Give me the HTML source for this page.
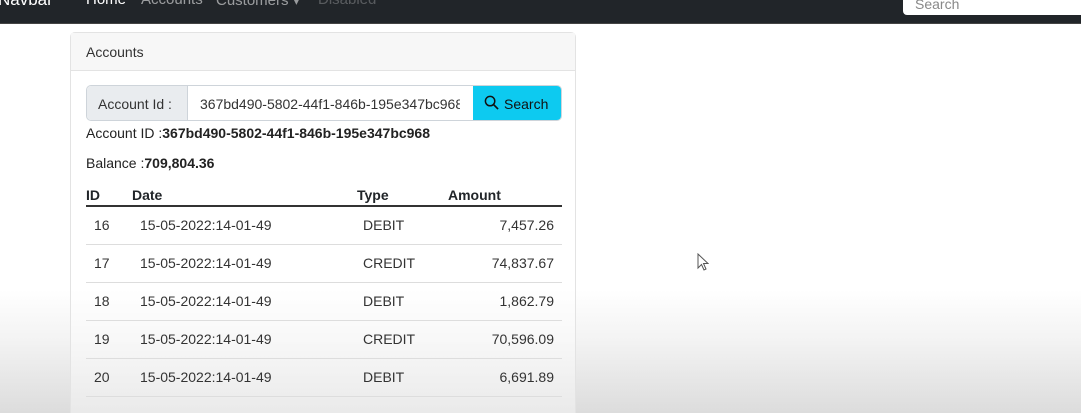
<!DOCTYPE html>
<html style="width:1081px;height:413px;overflow:hidden;background:linear-gradient(180deg,#fff 0,#fff 290px,#f3f3f3 340px,#dcdcdc 413px)"><head><meta charset="utf-8"><style>
*{box-sizing:border-box;margin:0;padding:0}
body{width:1081px;height:413px;overflow:hidden;font-family:"Liberation Sans",sans-serif;color:#212529;font-size:14px;
background:linear-gradient(180deg,#fff 0,#fff 290px,#f3f3f3 340px,#dcdcdc 413px);position:relative}
.nav{position:absolute;left:0;top:0;width:1081px;height:24px;background:#212529;border-bottom:1px solid #444}
.nav span{position:absolute;top:-9px;font-size:15px;color:rgba(255,255,255,.55)}
.srch{position:absolute;left:903px;top:-10px;width:190px;height:25px;background:#fff;border-radius:4px;color:#888;font-size:14px;padding:6px 12px}
.card{position:absolute;left:70px;top:32px;width:506px;height:400px;border:1px solid #e3e3e3;border-radius:5px;background:rgba(255,255,255,.4)}
.ch{height:38px;background:#f7f7f7;border-bottom:1px solid #e3e3e3;padding:11px 15px;font-size:14px;color:#333}
.ig{position:absolute;left:15px;top:52px;width:476px;height:36px;border:1px solid #ced4da;border-radius:5px;overflow:hidden;background:#fff}
.lab{position:absolute;left:0;top:0;width:101px;height:34px;background:#e9ecef;border-right:1px solid #ced4da;padding:10px 11px;color:#333}
.inp{position:absolute;left:113px;top:10px;width:260px;white-space:nowrap;overflow:hidden;color:#333}
.btn{position:absolute;right:0;top:0;width:88px;height:34px;background:#0dcaf0;padding:10px 0 0 31px;color:#111}
.t{position:absolute;left:15px;font-size:14px;color:#222}
table{position:absolute;left:15px;top:152px;width:476px;border-collapse:collapse}
th{text-align:left;font-weight:bold;height:21px;border-bottom:2px solid #333;font-size:14px;padding:0}
td{height:38px;border-bottom:1px solid #ddd;padding:0;font-size:14px;color:#333}
</style></head><body>
<div class="nav"><span style="left:-2px;color:#fff;font-size:17px;top:-10px">Navbar</span><span style="left:86px;color:#fff">Home</span><span style="left:141px">Accounts</span><span style="left:216px">Customers ▾</span><span style="left:318px;color:rgba(255,255,255,.25)">Disabled</span>
<div class="srch">Search</div></div>
<div class="card"><div class="ch">Accounts</div>
<div class="ig"><div class="lab">Account Id :</div><div class="inp">367bd490-5802-44f1-846b-195e347bc968</div>
<div class="btn"><svg style="position:absolute;left:11px;top:9px" width="15" height="15" viewBox="0 0 16 16"><circle cx="6.5" cy="6.5" r="5" fill="none" stroke="#111" stroke-width="1.6"/><path d="M10.2 10.2L15 15" stroke="#111" stroke-width="1.8"/></svg>Search</div></div>
<div class="t" style="top:92px">Account ID :<b>367bd490-5802-44f1-846b-195e347bc968</b></div>
<div class="t" style="top:122px">Balance :<b>709,804.36</b></div>
<table>
<tr><th style="width:46px">ID</th><th style="width:225px">Date</th><th style="width:91px">Type</th><th>Amount</th></tr>
<tr><td style="padding-left:8px">16</td><td style="padding-left:8px">15-05-2022:14-01-49</td><td style="padding-left:6px">DEBIT</td><td style="text-align:right;padding-right:8px">7,457.26</td></tr>
<tr><td style="padding-left:8px">17</td><td style="padding-left:8px">15-05-2022:14-01-49</td><td style="padding-left:6px">CREDIT</td><td style="text-align:right;padding-right:8px">74,837.67</td></tr>
<tr><td style="padding-left:8px">18</td><td style="padding-left:8px">15-05-2022:14-01-49</td><td style="padding-left:6px">DEBIT</td><td style="text-align:right;padding-right:8px">1,862.79</td></tr>
<tr><td style="padding-left:8px">19</td><td style="padding-left:8px">15-05-2022:14-01-49</td><td style="padding-left:6px">CREDIT</td><td style="text-align:right;padding-right:8px">70,596.09</td></tr>
<tr><td style="padding-left:8px">20</td><td style="padding-left:8px">15-05-2022:14-01-49</td><td style="padding-left:6px">DEBIT</td><td style="text-align:right;padding-right:8px">6,691.89</td></tr>
</table></div>
<svg style="position:absolute;left:697px;top:253px" width="12" height="18" viewBox="0 0 12 18"><path d="M1 1V15L4.5 11.5L7 17L9 16L6.5 10.5H11Z" fill="#fff" stroke="#555" stroke-width="1"/></svg>
</body></html>
